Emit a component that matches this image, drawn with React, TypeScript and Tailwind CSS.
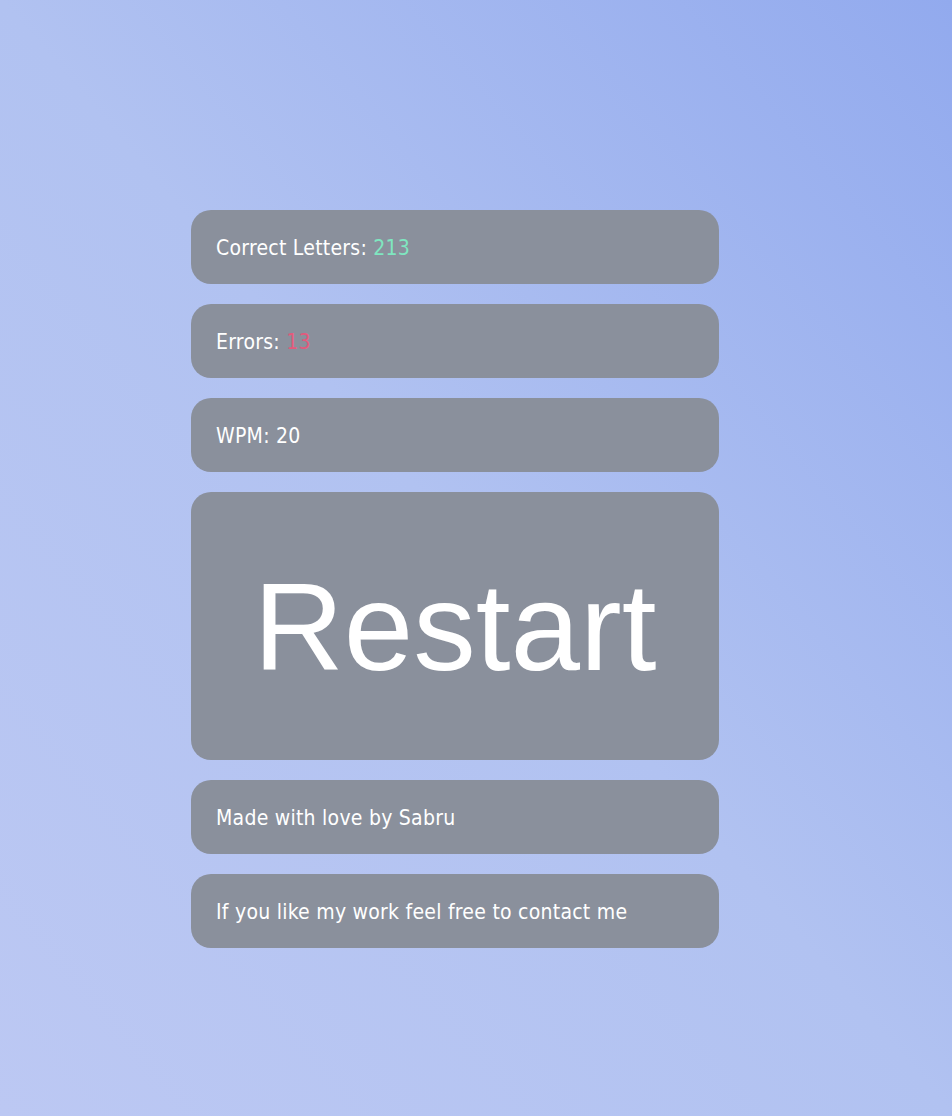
export default function App() {
  const rows = [
    { label: 'Correct Letters:', value: '213', color: 'text-[#7fe6c0]' },
    { label: 'Errors:', value: '13', color: 'text-[#e35a7c]' },
    { label: 'WPM:', value: '20', color: 'text-white' },
  ];

  const card =
    'flex h-[74px] w-[528px] items-center rounded-[20px] bg-[#8a909c] px-[25px] pt-[3px] text-[21px] tracking-[0.25px] text-white';

  return (
    <div className="min-h-[1116px] w-full bg-[linear-gradient(to_top_right,#bcc8f3_0%,#b1c2f1_50%,#92aaee_100%)] font-['DejaVu_Sans_Condensed',sans-serif]">
      <div className="flex flex-col items-start gap-5 pt-[210px] pl-[191px]">
        {rows.map((r) => (
          <div key={r.label} className={card}>
            <span>{r.label}&nbsp;</span>
            <span className={r.color}>{r.value}</span>
          </div>
        ))}

        <button
          type="button"
          className="flex h-[268px] w-[528px] items-center justify-center rounded-[20px] bg-[#8a909c] font-['Liberation_Sans',Arial,sans-serif] text-[125px] leading-none text-white"
        >
          Restart
        </button>

        <div className={card}>Made with love by Sabru</div>
        <div className={card}>If you like my work feel free to contact me</div>
      </div>
    </div>
  );
}
